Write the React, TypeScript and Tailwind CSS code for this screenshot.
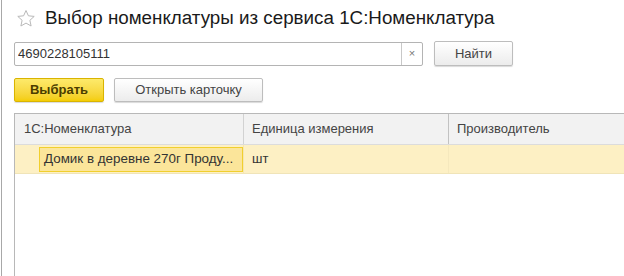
import { useState } from 'react';

// окно выбора номенклатуры (1С)
export default function App() {
  const [query, setQuery] = useState('4690228105111');

  return (
    <div
      className="w-[624px] h-[276px] overflow-hidden bg-white flex text-[#333]"
      style={{ fontFamily: '"Liberation Sans", Arial, sans-serif' }}
    >
      <div className="w-[2px] shrink-0 border-r border-[#a8a8a8]" />
      <div className="flex-1 min-w-0 flex flex-col pl-[12px]">
        {/* заголовок */}
        <div className="flex items-center h-[36px] pt-[1px]">
          <svg width="20" height="19" viewBox="0 0 20 19" className="ml-[2px] mr-[9px]">
            <path
              d="M10 1.5l2.4 5.3 5.8.6-4.3 3.9 1.2 5.7L10 14.1 4.9 17l1.2-5.7L1.8 7.4l5.8-.6z"
              fill="none"
              stroke="#b9b9b9"
              strokeWidth="1"
              strokeLinejoin="round"
            />
          </svg>
          <h1 className="text-[18.8px] leading-none text-[#1a1a1a]">
            Выбор номенклатуры из сервиса 1С:Номенклатура
          </h1>
        </div>

        {/* поиск */}
        <div className="flex items-center mt-[5px] h-[25px]">
          <div className="flex w-[409px] h-[24px] border border-[#b4b4b4] rounded-[2px] bg-white">
            <input
              value={query}
              onChange={(e) => setQuery(e.target.value)}
              className="flex-1 min-w-0 px-[3px] text-[13px] text-[#333] outline-none bg-transparent"
            />
            <button className="w-[21px] border-l border-[#c8c8c8] text-[11px] text-[#777] leading-none">
              ×
            </button>
          </div>
          <button className="ml-[11px] w-[79px] h-[25px] rounded-[2px] border border-[#bdbdbd] bg-gradient-to-b from-white to-[#ececec] shadow-[0_1px_1px_rgba(0,0,0,0.15)] text-[13px] text-[#444]">
            Найти
          </button>
        </div>

        {/* кнопки */}
        <div className="flex items-center gap-[10px] mt-[11px] h-[25px]">
          <button className="w-[90px] h-[24px] rounded-[2px] border border-[#d9b400] bg-gradient-to-b from-[#fdea6a] to-[#f4cd00] shadow-[0_1px_1px_rgba(0,0,0,0.15)] text-[13px] font-bold text-[#4a3d00]">
            Выбрать
          </button>
          <button className="w-[149px] h-[24px] rounded-[2px] border border-[#bdbdbd] bg-gradient-to-b from-white to-[#ececec] shadow-[0_1px_1px_rgba(0,0,0,0.15)] text-[13px] text-[#444]">
            Открыть карточку
          </button>
        </div>

        {/* таблица */}
        <div className="flex-1 mt-[11px] border-l border-t border-[#b8b8b8] bg-white">
          <div className="flex h-[31px] bg-[#f2f2f2] border-b border-[#dcdcdc] text-[13px] text-[#444]">
            <div className="w-[229px] shrink-0 flex items-center pl-[9px] border-r border-[#d2d2d2]">
              1С:Номенклатура
            </div>
            <div className="w-[205px] shrink-0 flex items-center pl-[8px] border-r border-[#c2c2c2]">
              Единица измерения
            </div>
            <div className="flex-1 flex items-center pl-[8px]">Производитель</div>
          </div>
          <div className="flex h-[29px] bg-[#fdf0c4] border-b border-[#f0e4b8] text-[13px] text-[#333]">
            <div className="w-[229px] shrink-0 flex items-center pl-[24px] py-[2px] border-r border-[#f5e6b0]">
              <div className="w-[204px] h-[25px] flex items-center px-[4px] bg-[#fbe59a] border border-[#f1cf2e] whitespace-nowrap overflow-hidden text-[13.4px]">
                Домик в деревне 270г Проду...
              </div>
            </div>
            <div className="w-[205px] shrink-0 flex items-center pl-[8px] border-r border-[#f5e8bd]">
              шт
            </div>
            <div className="flex-1" />
          </div>
        </div>
      </div>
    </div>
  );
}
